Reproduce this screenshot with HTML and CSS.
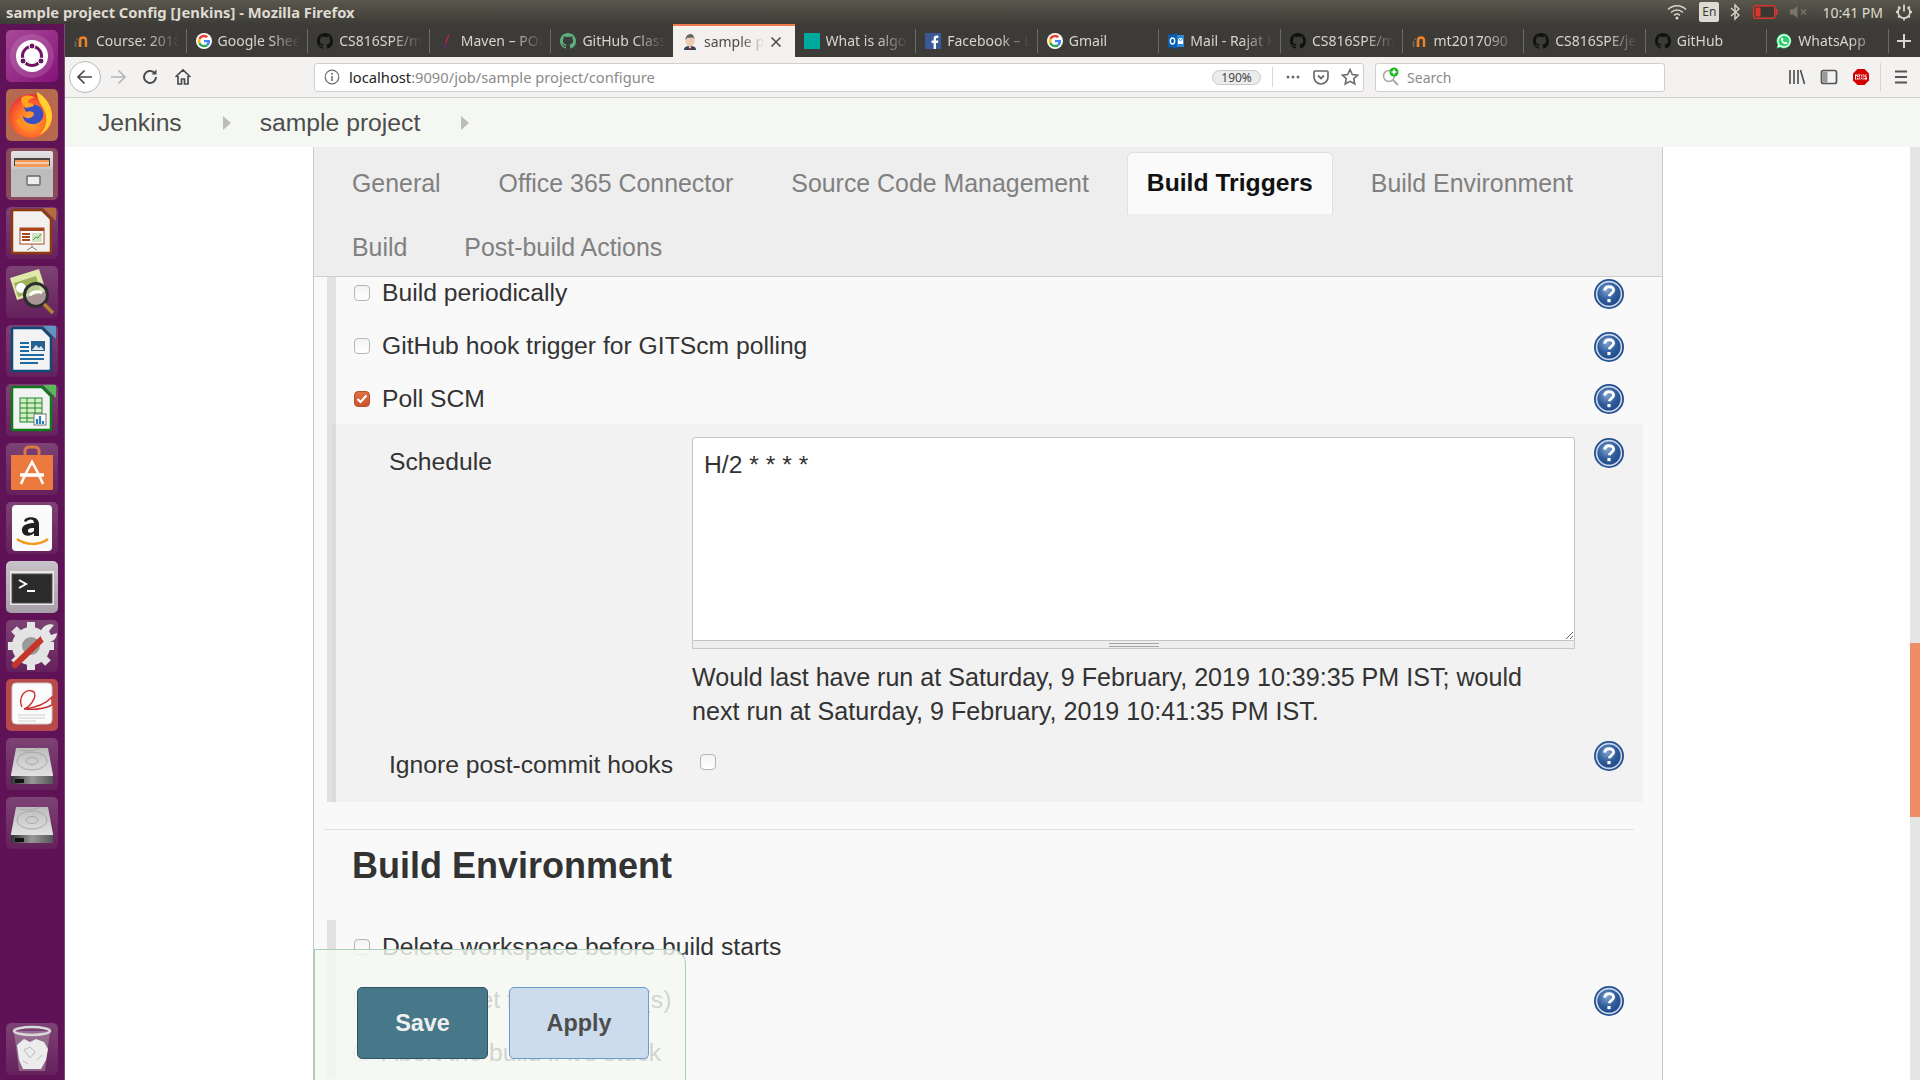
FILE: index.html
```html
<!DOCTYPE html>
<html lang="en">
<head>
<meta charset="utf-8">
<title>sample project Config [Jenkins]</title>
<link rel="stylesheet" href="styles.css">
</head>
<body>
<svg class="defs" width="0" height="0" aria-hidden="true">
  <defs>
    <radialGradient id="helpg" cx="42%" cy="35%" r="70%"><stop offset="0" stop-color="#7fa3d0"/><stop offset=".55" stop-color="#2f5c9b"/><stop offset="1" stop-color="#1f4586"/></radialGradient>
    <radialGradient id="ffg" cx="50%" cy="60%" r="60%"><stop offset="0" stop-color="#ffb02e"/><stop offset=".6" stop-color="#ff6a2a"/><stop offset="1" stop-color="#ea2f3a"/></radialGradient>
    <linearGradient id="filesg" x1="0" y1="0" x2="0" y2="1"><stop offset="0" stop-color="#e4e4e4"/><stop offset="1" stop-color="#9a9a9a"/></linearGradient>
    <linearGradient id="driveg" x1="0" y1="0" x2="0" y2="1"><stop offset="0" stop-color="#bdbdbd"/><stop offset="1" stop-color="#ececec"/></linearGradient>
    <linearGradient id="driveb" x1="0" y1="0" x2="1" y2="0"><stop offset="0" stop-color="#333"/><stop offset=".5" stop-color="#999"/><stop offset="1" stop-color="#555"/></linearGradient>
    <symbol id="i-help" viewBox="0 0 30 30">
      <circle cx="15" cy="15" r="15" fill="#25508f"/>
      <circle cx="15" cy="15" r="12.4" fill="url(#helpg)" stroke="#c9d8ec" stroke-width="1.6"/>
      <path d="M10.6 11.6c.3-2.6 2.2-3.9 4.6-3.9 2.6 0 4.4 1.5 4.4 3.6 0 2.9-3.9 3-4.4 6" fill="none" stroke="#fff" stroke-width="2.9"/>
      <rect x="13.4" y="20" width="3.2" height="3.2" fill="#fff"/>
    </symbol>
    <symbol id="i-github" viewBox="0 0 16 16"><path d="M8 0C3.58 0 0 3.58 0 8c0 3.54 2.29 6.53 5.47 7.59.4.07.55-.17.55-.38 0-.19-.01-.82-.01-1.49-2.01.37-2.53-.49-2.69-.94-.09-.23-.48-.94-.82-1.13-.28-.15-.68-.52-.01-.53.63-.01 1.08.58 1.23.82.72 1.21 1.87.87 2.33.66.07-.52.28-.87.51-1.07-1.78-.2-3.64-.89-3.64-3.95 0-.87.31-1.59.82-2.15-.08-.2-.36-1.02.08-2.12 0 0 .67-.21 2.2.82.64-.18 1.32-.27 2-.27.68 0 1.36.09 2 .27 1.53-1.04 2.2-.82 2.2-.82.44 1.1.16 1.92.08 2.12.51.56.82 1.27.82 2.15 0 3.07-1.87 3.75-3.65 3.95.29.25.54.73.54 1.48 0 1.07-.01 1.93-.01 2.2 0 .21.15.46.55.38A8.013 8.013 0 0016 8c0-4.42-3.58-8-8-8z"/></symbol>
    <symbol id="i-google" viewBox="0 0 48 48"><circle cx="24" cy="24" r="24" fill="#fff"/><g transform="translate(5 5) scale(.79)"><path fill="#EA4335" d="M24 9.5c3.5 0 6.7 1.2 9.2 3.6l6.9-6.9C35.9 2.4 30.5 0 24 0 14.6 0 6.5 5.4 2.6 13.2l8 6.2C12.4 13.7 17.7 9.5 24 9.5z"/><path fill="#4285F4" d="M47 24.6c0-1.6-.1-3.1-.4-4.6H24v9h12.9c-.6 3-2.2 5.5-4.7 7.2l7.7 6C44.400 38 47 31.900 47 24.600z"/><path fill="#FBBC05" d="M10.600 28.600A14.500 14.500 0 0 1 9.800 24c0-1.600.3-3.100.8-4.600l-8-6.200A24 24 0 0 0 0 24c0 3.900.9 7.500 2.600 10.800l8-6.200z"/><path fill="#34A853" d="M24 48c6.500 0 11.900-2.100 15.900-5.800l-7.700-6c-2.200 1.400-4.900 2.300-8.200 2.300-6.300 0-11.600-4.200-13.400-10l-8 6.200C6.500 42.600 14.600 48 24 48z"/></g></symbol>
    <symbol id="i-moodle" viewBox="0 0 16 16"><path d="M6 14V7.500c0-2 1.500-3 3-3s3 1 3 3V14" fill="none" stroke="#e8842c" stroke-width="2.400"/><path d="M6 6.500V14" stroke="#e8842c" stroke-width="2.400"/><path d="M1.500 14V8M3.300 7V5.500" stroke="#6e6a62" stroke-width="1.600"/></symbol>
    <symbol id="i-feather" viewBox="0 0 16 16"><path d="M10 1C8 4 6 9 5 15l1.300-.4C7.500 10 9 5 10.600 1.500z" fill="#c7253e"/><path d="M6.600 9 5 15l1.300-.4L7.500 10z" fill="#4c2a86"/></symbol>
    <symbol id="i-jenkins" viewBox="0 0 16 16"><path d="M2 16c0-3 2-4 6-4s6 1 6 4z" fill="#33435a"/><path d="M6.500 12.500h3L8 15z" fill="#fff"/><path d="M6 13l2 1.300L10 13v1.800H6z" fill="#b02a2a"/><ellipse cx="8" cy="6.500" rx="4.500" ry="6" fill="#eecbb0"/><path d="M3.500 6C3.500 2 6 0 8.500 0s4 2.500 4 5.500l-1.200-2C9 4 6 3.500 5 4z" fill="#6b6661"/></symbol>
    <symbol id="i-facebook" viewBox="0 0 16 16"><rect width="16" height="16" fill="#3b5998"/><path d="M11 16v-6h2l.3-2.400H11V6c0-.7.3-1.100 1.200-1.100h1.200V2.700C13 2.600 12.300 2.600 11.600 2.600 9.800 2.600 8.600 3.700 8.600 5.700v1.900h-2V10h2v6z" fill="#fff"/></symbol>
    <symbol id="i-outlook" viewBox="0 0 16 16"><rect x="5" y="2" width="11" height="12" fill="#2e8ad8"/><path d="M0 2l9-2v16l-9-2z" fill="#0b5cad"/><ellipse cx="4.500" cy="8" rx="2.200" ry="3" fill="none" stroke="#fff" stroke-width="1.400"/><path d="M10 5h5v6h-5z" fill="#fff"/><path d="M10 5l2.500 3L15 5" fill="none" stroke="#2e8ad8"/></symbol>
    <symbol id="i-whatsapp" viewBox="0 0 16 16"><path d="M8 .4a7.500 7.500 0 0 0-6.400 11.400L.5 15.600l3.900-1A7.500 7.500 0 1 0 8 .4z" fill="#25d366"/><path d="M8 2a6 6 0 0 0-5 9.300l-.6 2.200 2.300-.6A6 6 0 1 0 8 2z" fill="#25d366" stroke="#fff" stroke-width="1.300"/><path d="M5.800 4.700c-.6.400-1 1.200-.8 2.200.4 2 2.300 3.900 4.300 4.300 1 .2 1.900-.3 2.200-1l-.2-.8-1.500-.7-.7.800c-1-.3-1.900-1.200-2.300-2.200l.7-.7-.7-1.600z" fill="#fff"/></symbol>
    <symbol id="i-drive" viewBox="0 0 52 52"><path d="M10 10h32l5 27v9H5v-9z" fill="url(#driveg)"/><ellipse cx="26" cy="23" rx="15" ry="9" fill="none" stroke="#a8a8a8"/><ellipse cx="26" cy="23" rx="6" ry="3.500" fill="none" stroke="#a8a8a8"/><path d="M14 12c10 2 16 0 20-2" fill="none" stroke="#a8a8a8"/><rect x="5" y="38" width="42" height="8" fill="url(#driveb)"/><rect x="9" y="41" width="9" height="4" fill="#111"/></symbol>
  </defs>
</svg>

<div class="screen">
  <header class="titlebar">
    <span class="win-title">sample project Config [Jenkins] - Mozilla Firefox</span>
    <div class="indicators">
      <svg class="ind ind-wifi" width="20" height="16" viewBox="0 0 20 16"><g fill="none" stroke="#d8d5cd" stroke-width="1.500"><path d="M1 5.500c5-5 13-5 18 0"/><path d="M4 8.500c3.500-3.200 8.500-3.200 12 0"/><path d="M7 11.300c1.800-1.500 4.200-1.500 6 0"/></g><circle cx="10" cy="14" r="1.500" fill="#d8d5cd"/></svg>
      <span class="ind-lang">En</span>
      <svg class="ind ind-bt" width="10" height="18" viewBox="0 0 10 18"><path d="M1 5l8 7-4 4V2l4 4-8 7" fill="none" stroke="#d8d5cd" stroke-width="1.400"/></svg>
      <svg class="ind ind-batt" width="25" height="14" viewBox="0 0 25 14"><rect x=".7" y=".7" width="21" height="12.600" rx="1.500" fill="#3a3833" stroke="#d9372c" stroke-width="1.400"/><rect x="2.500" y="2.500" width="5" height="9" fill="#d9372c"/><rect x="22.500" y="4" width="2" height="6" fill="#d9372c"/></svg>
      <svg class="ind ind-vol" width="18" height="14" viewBox="0 0 18 14"><path d="M0 4.500h3L7.500 1v12L3 9.500H0z" fill="#77746c"/><path d="M11 4.500l5 5m0-5l-5 5" stroke="#77746c" stroke-width="1.500"/></svg>
      <span class="clock">10:41 PM</span>
      <svg class="ind ind-power" width="18" height="18" viewBox="0 0 18 18"><path d="M9 1.500v7" stroke="#d8d5cd" stroke-width="1.800"/><path d="M5.500 4.200a6 6 0 1 0 7 0" fill="none" stroke="#d8d5cd" stroke-width="1.800"/><path d="M1 9h2M15 9h2M3.200 3.500l1 1M13.800 4.500l1-1M3.200 14.500l1.300-1.300M13.500 13.200l1.300 1.300M9 16v1.500" stroke="#d8d5cd" stroke-width="1.800"/></svg>
    </div>
  </header>

  <div class="desk">
    <nav class="launcher">
      <div class="tile t-ubuntu"><svg viewBox="0 0 52 52"><circle cx="26" cy="26" r="22" fill="#fff" opacity=".13"/><circle cx="26" cy="26" r="16" fill="#fff"/><circle cx="26" cy="26" r="9.500" fill="none" stroke="#6e1563" stroke-width="3"/><circle cx="26" cy="16" r="3" fill="#6e1563" stroke="#fff"/><circle cx="17" cy="31" r="3" fill="#6e1563" stroke="#fff"/><circle cx="35" cy="31" r="3" fill="#6e1563" stroke="#fff"/></svg></div>
      <div class="tile t-firefox"><svg viewBox="0 0 52 52"><circle cx="25" cy="27" r="22" fill="url(#ffg)"/><path d="M31 3c9 5 16 15 15 26-1 8-6 14-13 17 7-6 9-15 6-23-2-6-8-11-8-20z" fill="#ffd02e"/><path d="M18 18c6-4 17-4 19 5 2 8-5 13-12 12-5-1-8-4-8-8 4 4 11 2 11-3-2-2-6-2-8-1z" fill="#3a4fc2"/><path d="M14 30c3 9 13 12 20 8-8 7-21 3-24-7z" fill="#ff8f1f"/><path d="M16 8c5-2 9-2 13 1-4 0-7 2-7 5 3 0 6 1 6 3l-8 2c-4-3-6-7-4-11z" fill="#ffa21f"/></svg></div>
      <div class="tile t-files"><svg viewBox="0 0 52 52"><rect x="5" y="3" width="42" height="46" rx="2" fill="url(#filesg)"/><rect x="8" y="10" width="36" height="8" fill="#4a4340"/><rect x="9" y="12" width="34" height="7" fill="#f09a5c"/><path d="M9 15h34" stroke="#fff"/><rect x="5" y="21" width="42" height="28" rx="1" fill="#bdbdbd"/><rect x="21" y="28" width="13" height="9" rx="1" fill="#eee" stroke="#666" stroke-width="1.400"/></svg></div>
      <div class="tile t-dim"><svg viewBox="0 0 52 52"><path d="M7 3h29l9 9v33a1 1 0 0 1-1 1H7a1 1 0 0 1-1-1V4z" fill="#f3f1ef" stroke="#8f3b0d" stroke-width="2.500"/><path d="M37 1l13 0v13z" fill="#b56c3d"/><rect x="14" y="21" width="24" height="16" fill="#fff" stroke="#a8481a"/><rect x="14" y="21" width="24" height="3" fill="#a8481a"/><path d="M16 27h8M16 30h8M16 33h8" stroke="#a8481a" stroke-width="1.800"/><rect x="26" y="26" width="10" height="9" fill="#cfe3c5"/><path d="M27 33l3-3 2 1 3-4" stroke="#4e9a3a" fill="none"/><path d="M26 37v3l-5 3m5-3l5 3" stroke="#888" fill="none"/></svg></div>
      <div class="tile t-dim"><svg viewBox="0 0 52 52"><path d="M4 12l29-9 7 22-29 9z" fill="#dfe8a8"/><path d="M8 17l22-7 4 14-22 7z" fill="#9db05c"/><circle cx="15" cy="22" r="5" fill="#fff"/><circle cx="30" cy="29" r="11.500" fill="#cfdcb8" fill-opacity=".6" stroke="#2d2d2d" stroke-width="3"/><path d="M24 29c3-4 8-4 12-2" stroke="#fff" stroke-width="3" fill="none"/><path d="M38 38l9 9" stroke="#b08532" stroke-width="3.500"/></svg></div>
      <div class="tile t-dim"><svg viewBox="0 0 52 52"><path d="M7 3h29l9 9v33a1 1 0 0 1-1 1H7a1 1 0 0 1-1-1V4z" fill="#f3f3f3" stroke="#0f4a78" stroke-width="2.500"/><path d="M37 1l13 0v13z" fill="#5a97c2"/><path d="M14 18h9M14 22h9M14 26h9M14 30h24M14 34h24M14 38h18" stroke="#1f6aa0" stroke-width="2"/><rect x="25" y="16" width="14" height="10" fill="#26628f"/><path d="M26 25l4-5 3 3 2-2 3 4z" fill="#dfe6ec"/></svg></div>
      <div class="tile t-dim"><svg viewBox="0 0 52 52"><path d="M7 3h29l9 9v33a1 1 0 0 1-1 1H7a1 1 0 0 1-1-1V4z" fill="#f3f3f3" stroke="#0f7a1a" stroke-width="2.500"/><path d="M37 1l13 0v13z" fill="#58b85a"/><rect x="14" y="14" width="22" height="24" fill="#d7ecc9" stroke="#1d8a26"/><path d="M14 19h22M14 24h22M14 29h22M14 34h22M21 14v24M29 14v24" stroke="#1d8a26"/><rect x="28" y="30" width="12" height="11" fill="#fff" stroke="#777"/><path d="M31 40v-5M34 40v-8M37 40v-3" stroke-width="2.200" stroke="#2f7fc0"/></svg></div>
      <div class="tile t-dim"><svg viewBox="0 0 52 52"><path d="M19 12V8a4 4 0 0 1 4-4h6a4 4 0 0 1 4 4v4" fill="none" stroke="#d77a45" stroke-width="3"/><path d="M5 12h42v34a1 1 0 0 1-1 1H6a1 1 0 0 1-1-1z" fill="#ec7a3e"/><path d="M26 19l-7 13h14zM19 32l-4 9m18-9l4 9" fill="none" stroke="#fff" stroke-width="2.500"/><path d="M14 32h24" stroke="#fff" stroke-width="3.500"/></svg></div>
      <div class="tile t-dim"><svg viewBox="0 0 52 52"><rect x="6" y="3" width="40" height="46" rx="4" fill="#fafafa"/><path d="M18 19c1-5 15-6 15 3v12h-5v-3c-3 4-11 4-12-2-1-6 6-8 12-8 0-5-6-4-8-1zM28 26c-3 0-6 0-6 3 0 3 6 2 6-1z" fill="#1f1f1f" fill-rule="evenodd"/><path d="M11 37c8 6 22 7 31 0" fill="none" stroke="#f29a1f" stroke-width="2.500"/></svg></div>
      <div class="tile t-term"><svg viewBox="0 0 52 52"><rect x="4" y="10" width="44" height="34" fill="#e9e9e9"/><rect x="6" y="13" width="40" height="29" fill="#2b2b2b" stroke="#555"/><path d="M13 19l7 4-7 4" fill="none" stroke="#fff" stroke-width="2"/><path d="M21 30h8" stroke="#fff" stroke-width="2"/></svg></div>
      <div class="tile t-dim"><svg viewBox="0 0 52 52"><circle cx="25" cy="26" r="14" fill="#9a9a9a" stroke="#e4e4e4" stroke-width="10"/><path d="M25 2v6M25 44v6M2 26h6M42 26h6M8 9l4 4M38 39l4 4M8 43l4-4" stroke="#e4e4e4" stroke-width="8"/><path d="M9 45l27-26" stroke="#c4362b" stroke-width="6" stroke-linecap="round"/><path d="M35 11c2-6 9-8 13-6l-5 6 2 4 6-2c0 7-7 11-13 9-3-3-4-7-3-11z" fill="#e6e6e6"/></svg></div>
      <div class="tile t-evince"><svg viewBox="0 0 52 52"><rect x="6" y="4" width="40" height="41" rx="4" fill="#fbfbfb" stroke="#ccc"/><path d="M16 28c-4-9 2-18 10-16 7 2 0 15-8 18 9-1 20-3 28-12v8c-8 4-18 5-28 4" fill="none" stroke="#cf2d2d" stroke-width="1.400"/><path d="M12 36h27M12 39h27M12 42h18" stroke="#cfcfcf" stroke-width="1.200"/></svg></div>
      <div class="tile t-dim"><svg viewBox="0 0 52 52"><use href="#i-drive"/></svg></div>
      <div class="tile t-dim"><svg viewBox="0 0 52 52"><use href="#i-drive"/></svg></div>
      <div class="tile t-dim t-trash"><svg viewBox="0 0 52 52"><path d="M8 8l5 40h26l5-40z" fill="#b9a9b8" fill-opacity=".45"/><ellipse cx="26" cy="8" rx="18" ry="4" fill="none" stroke="#d8d8d8" stroke-width="2.500"/><path d="M11 22l7-6 6 3 6-3 8 3 4 7-2 11-5 9H17l-4-9z" fill="#ececec"/><path d="M18 27l6-3 5 5-5 6zM31 37l5-5M17 38l5 3" stroke="#bbb" fill="none"/></svg></div>
    </nav>

    <div class="browser">
      <div class="tabstrip">
        <div class="tab"><div class="tab-in"><svg class="fav"><use href="#i-moodle"/></svg><span class="tab-label">Course: 2018-19</span></div></div>
        <div class="tab"><div class="tab-in"><svg class="fav"><use href="#i-google"/></svg><span class="tab-label">Google Sheets</span></div></div>
        <div class="tab"><div class="tab-in"><svg class="fav fav-black"><use href="#i-github"/></svg><span class="tab-label">CS816SPE/maven</span></div></div>
        <div class="tab"><div class="tab-in"><svg class="fav"><use href="#i-feather"/></svg><span class="tab-label">Maven – POM Reference</span></div></div>
        <div class="tab"><div class="tab-in no-sep"><svg class="fav fav-green"><use href="#i-github"/></svg><span class="tab-label">GitHub Classroom</span></div></div>
        <div class="tab tab-active"><div class="tab-in no-sep"><svg class="fav"><use href="#i-jenkins"/></svg><span class="tab-label">sample project</span><svg class="tab-x" width="12" height="12" viewBox="0 0 12 12"><path d="M1.500 1.500l9 9m0-9l-9 9" stroke="#4a4a4a" stroke-width="1.500"/></svg></div></div>
        <div class="tab"><div class="tab-in"><span class="fav fav-teal"></span><span class="tab-label">What is algorithm</span></div></div>
        <div class="tab"><div class="tab-in"><svg class="fav"><use href="#i-facebook"/></svg><span class="tab-label">Facebook – Log In</span></div></div>
        <div class="tab"><div class="tab-in"><svg class="fav"><use href="#i-google"/></svg><span class="tab-label">Gmail</span></div></div>
        <div class="tab"><div class="tab-in"><svg class="fav"><use href="#i-outlook"/></svg><span class="tab-label">Mail - Rajat Kumar</span></div></div>
        <div class="tab"><div class="tab-in"><svg class="fav fav-black"><use href="#i-github"/></svg><span class="tab-label">CS816SPE/maven</span></div></div>
        <div class="tab"><div class="tab-in"><svg class="fav"><use href="#i-moodle"/></svg><span class="tab-label">mt2017090</span></div></div>
        <div class="tab"><div class="tab-in"><svg class="fav fav-black"><use href="#i-github"/></svg><span class="tab-label">CS816SPE/jenkins</span></div></div>
        <div class="tab"><div class="tab-in"><svg class="fav fav-black"><use href="#i-github"/></svg><span class="tab-label">GitHub</span></div></div>
        <div class="tab"><div class="tab-in"><svg class="fav"><use href="#i-whatsapp"/></svg><span class="tab-label">WhatsApp</span></div></div>
        <div class="tab-new"><svg width="16" height="16" viewBox="0 0 16 16"><path d="M8 1v14M1 8h14" stroke="#d8d5cd" stroke-width="2"/></svg></div>
      </div>

      <div class="navbar">
        <button class="nav-btn nav-back"><svg width="18" height="18" viewBox="0 0 18 18"><path d="M16 9H2.500M8.500 2.500L2 9l6.500 6.500" fill="none" stroke="#4a4a4a" stroke-width="1.700"/></svg></button>
        <button class="nav-btn"><svg width="18" height="18" viewBox="0 0 18 18"><path d="M2 9h13.500M9.500 2.500L16 9l-6.500 6.500" fill="none" stroke="#b5b5b5" stroke-width="1.700"/></svg></button>
        <button class="nav-btn"><svg width="18" height="18" viewBox="0 0 18 18"><path d="M15 9a6 6 0 1 1-2-4.500" fill="none" stroke="#4a4a4a" stroke-width="2"/><path d="M15.500 1.500v5h-5z" fill="#4a4a4a"/></svg></button>
        <button class="nav-btn"><svg width="18" height="18" viewBox="0 0 18 18"><path d="M1.500 9L9 2l7.500 7M4 8v8h3.500v-5h3v5H14V8" fill="none" stroke="#4a4a4a" stroke-width="1.700"/></svg></button>
        <div class="urlbar">
          <svg class="url-info" width="16" height="16" viewBox="0 0 16 16"><circle cx="8" cy="8" r="6.800" fill="none" stroke="#6b6b6b" stroke-width="1.200"/><path d="M8 7v5" stroke="#6b6b6b" stroke-width="1.500"/><circle cx="8" cy="4.700" r="1" fill="#6b6b6b"/></svg>
          <span class="url-text"><b class="url-host">localhost</b>:9090/job/sample project/configure</span>
          <span class="zoom-pill">190%</span>
          <span class="url-sep"></span>
          <svg class="url-ico" width="16" height="16" viewBox="0 0 16 16"><g fill="#6b6b6b"><circle cx="3" cy="8" r="1.500"/><circle cx="8" cy="8" r="1.500"/><circle cx="13" cy="8" r="1.500"/></g></svg>
          <svg class="url-ico" width="16" height="16" viewBox="0 0 16 16"><path d="M2 2h12a1 1 0 0 1 1 1v5a7 7 0 0 1-14 0V3a1 1 0 0 1 1-1z" fill="none" stroke="#6b6b6b" stroke-width="1.700"/><path d="M5 6.500l3 3 3-3" fill="none" stroke="#6b6b6b" stroke-width="1.800"/></svg>
          <svg class="url-ico" width="18" height="18" viewBox="0 0 18 18"><path d="M9 1.500l2.300 5 5.300.6-3.900 3.600 1.100 5.300L9 13.300 4.200 16l1.100-5.300L1.400 7.100l5.300-.6z" fill="none" stroke="#6b6b6b" stroke-width="1.600"/></svg>
        </div>
        <div class="searchbar">
          <svg class="search-ico" width="18" height="20" viewBox="0 0 18 20"><circle cx="7" cy="9" r="5.500" fill="none" stroke="#a8a8a8" stroke-width="1.500"/><path d="M11 13l5 5" stroke="#a8a8a8" stroke-width="1.800"/><circle cx="12" cy="5" r="4.500" fill="#1cb51c"/><path d="M12 2.500v5M9.500 5h5" stroke="#fff" stroke-width="1.500"/></svg>
          <span class="search-text">Search</span>
        </div>
        <div class="nav-right">
          <svg width="18" height="18" viewBox="0 0 18 18"><path d="M2 2v14M6 2v14M10 2v14M12.500 2l4 14" stroke="#555" stroke-width="1.700" fill="none"/></svg>
          <svg width="18" height="18" viewBox="0 0 18 18"><rect x="1.500" y="2.500" width="15" height="13" rx="2" fill="none" stroke="#555" stroke-width="1.700"/><rect x="2.500" y="3.500" width="5" height="11" fill="#999"/></svg>
          <svg width="18" height="18" viewBox="0 0 18 18"><path d="M5.500 1h7L17 5.500v7L12.500 17h-7L1 12.500v-7z" fill="#d40000"/><path d="M3 6.500h12v5H3z" fill="#fff"/><path d="M4.500 11.500V8l1.200-1 1.200 1v3.500M4.500 9.500h2.400M8.400 6.700v4.600h1.600a1.100 1.100 0 0 0 0-2.300H8.400M8.400 9h1.400a1 1 0 0 0 0-2.200H8.400M12 11.500V6.800h1.300a1.300 1.300 0 0 1 0 2.700H12" fill="none" stroke="#d40000" stroke-width=".9"/></svg>
          <span class="nav-sep"></span>
          <svg width="18" height="18" viewBox="0 0 18 18"><path d="M3 3.500h12M3 9h12M3 14.500h12" stroke="#555" stroke-width="1.800"/></svg>
        </div>
      </div>

      <div class="breadcrumb">
        <span class="crumb">Jenkins</span><span class="crumb-arrow"></span>
        <span class="crumb">sample project</span><span class="crumb-arrow"></span>
      </div>

      <div class="workspace">
        <main class="panel">
          <div class="cfg-tabs">
            <span class="cfg-tab">General</span>
            <span class="cfg-tab">Office 365 Connector</span>
            <span class="cfg-tab">Source Code Management</span>
            <span class="cfg-tab cfg-tab-active">Build Triggers</span>
            <span class="cfg-tab">Build Environment</span>
            <span class="cfg-tab">Build</span>
            <span class="cfg-tab">Post-build Actions</span>
          </div>

          <section class="triggers">
            <div class="row"><span class="cb"></span><label class="row-label">Build periodically</label><svg class="help"><use href="#i-help"/></svg></div>
            <div class="row"><span class="cb"></span><label class="row-label">GitHub hook trigger for GITScm polling</label><svg class="help"><use href="#i-help"/></svg></div>
            <div class="row row-last"><span class="cb cb-on"><svg width="16" height="16" viewBox="0 0 16 16"><path d="M3.500 8l3 3 6-6.500" fill="none" stroke="#fff" stroke-width="2.200"/></svg></span><label class="row-label">Poll SCM</label><svg class="help"><use href="#i-help"/></svg></div>
            <div class="sub">
              <div class="sub-label">Schedule</div>
              <div class="sub-field">
                <textarea class="schedule">H/2 * * * *</textarea>
                <div class="grippie"><span class="grip"></span></div>
                <p class="validation">Would last have run at Saturday, 9 February, 2019 10:39:35 PM IST; would next run at Saturday, 9 February, 2019 10:41:35 PM IST.</p>
              </div>
              <svg class="help sub-help"><use href="#i-help"/></svg>
              <div class="sub-label sub-label-2">Ignore post-commit hooks</div>
              <div class="sub-field"><span class="cb cb-ignore"></span></div>
              <svg class="help sub-help-2"><use href="#i-help"/></svg>
            </div>
          </section>

          <hr class="rule">
          <h2 class="sect-title">Build Environment</h2>

          <section class="env">
            <div class="row"><span class="cb"></span><label class="row-label">Delete workspace before build starts</label></div>
            <div class="row"><span class="cb"></span><label class="row-label">Use secret text(s) or file(s)</label><svg class="help"><use href="#i-help"/></svg></div>
            <div class="row"><span class="cb"></span><label class="row-label">Abort the build if it's stuck</label></div>
          </section>

          <div class="savebar">
            <button class="btn btn-save">Save</button>
            <button class="btn btn-apply">Apply</button>
          </div>
        </main>
        <div class="scrollbar"><div class="thumb"></div></div>
      </div>
    </div>
  </div>
</div>
</body>
</html>
```

FILE: styles.css
```css
* { box-sizing: border-box; }
html, body { margin: 0; padding: 0; height: 100%; overflow: hidden; }
body { font-family: "Liberation Sans", Arial, sans-serif; color: #333; background: #fff; }
.defs { position: absolute; }
.screen { width: 1920px; height: 1080px; display: flex; flex-direction: column; overflow: hidden; }

/* Ubuntu title bar */
.titlebar { height: 24px; flex: none; display: flex; align-items: center; justify-content: space-between; padding-left: 6px; background: linear-gradient(#5a574c, #3d3c37); }
.win-title { font: 700 14.75px "Noto Sans", sans-serif; color: #dfdbd2; }
.indicators { display: flex; align-items: center; height: 24px; }
.ind { flex: none; }
.ind-wifi { margin-right: 12px; }
.ind-lang { width: 20px; height: 20px; margin-right: 11px; background: #dfdbd2; color: #3c3b37; font: 12px/20px "Noto Sans", sans-serif; text-align: center; border-radius: 2px; }
.ind-bt { margin-right: 13px; }
.ind-batt { margin-right: 12px; }
.ind-vol { margin-right: 14px; }
.clock { font: 14px "Noto Sans", sans-serif; color: #dfdbd2; margin-right: 12px; }
.ind-power { margin-right: 7px; }

.desk { flex: 1; display: flex; min-height: 0; }

/* Launcher */
.launcher { width: 65px; flex: none; display: flex; flex-direction: column; gap: 7px; padding: 6px 0 5px 6px; background: #5f1256; border-right: 1px solid #7d4a77; }
.tile { width: 52px; height: 52px; flex: none; border-radius: 5px; }
.tile svg { display: block; width: 52px; height: 52px; }
.t-ubuntu { background: linear-gradient(135deg, #a84a99, #87127a); }
.t-firefox { background: #b5694f; }
.t-files { background: #8b4a5b; }
.t-dim { background: linear-gradient(#7d4274, #65215c); }
.t-term { background: linear-gradient(#c8c3c8, #a89fa8); }
.t-evince { background: #b94a4c; }
.t-trash { margin-top: auto; }

/* Browser chrome */
.browser { flex: 1; min-width: 0; display: flex; flex-direction: column; }
.tabstrip { height: 33px; flex: none; display: flex; background: #3c3b37; }
.tab { flex: 1 1 0; min-width: 0; display: flex; align-items: center; }
.tab-in { flex: 1; min-width: 0; height: 24px; display: flex; align-items: center; gap: 6px; padding-left: 9px; border-right: 1px solid #6d6b66; }
.no-sep { border-right: 0; }
.tab-active { background: #f3f0ee; border-top: 2px solid #ef7b4f; }
.tab-new { width: 31px; flex: none; display: flex; align-items: center; justify-content: center; }
.fav { width: 16px; height: 16px; flex: none; display: block; }
.fav-black { fill: #111; }
.fav-green { fill: #5bb07e; }
.fav-teal { background: #00a99d; }
.tab-label { flex: 1; min-width: 0; margin-right: 7px; overflow: hidden; white-space: nowrap; font: 14px "Noto Sans", sans-serif; color: #d8d5cd; -webkit-mask-image: linear-gradient(90deg, #000 62%, transparent 100%); mask-image: linear-gradient(90deg, #000 62%, transparent 100%); }
.tab-active .tab-label { color: #4a4a4a; margin-right: 0; }
.tab-x { flex: none; margin-right: 13px; }

.navbar { height: 41px; flex: none; display: flex; align-items: center; padding-left: 4px; background: #f4f2f0; border-bottom: 1px solid #cfcdca; }
.nav-btn { width: 32px; height: 32px; flex: none; padding: 0; display: flex; align-items: center; justify-content: center; background: none; border: 0; border-radius: 50%; }
.nav-btn + .nav-btn { margin-left: .7px; }
.nav-back { background: #fff; border: 1px solid #b9b9b9; }
.urlbar { width: 1050px; height: 29px; flex: none; margin-left: 115px; display: flex; align-items: center; padding: 0 4px 0 9px; background: #fff; border: 1px solid #cfcfcf; border-radius: 3px; }
.url-info { flex: none; margin-right: 9px; }
.url-text { flex: 1; font: 14.7px "Noto Sans", sans-serif; color: #8a8a8a; white-space: nowrap; }
.url-host { font-weight: 400; color: #222; }
.zoom-pill { width: 49px; height: 15px; margin-right: 11px; font: 12px/13px "Noto Sans", sans-serif; text-align: center; color: #444; background: #ececec; border: 1px solid #c8c8c8; border-radius: 8px; }
.url-sep { width: 1px; height: 20px; margin-right: 12px; background: #d8d8d8; }
.url-ico { flex: none; margin-right: 12px; }
.url-ico:last-child { margin-right: 0; }
.searchbar { width: 290px; height: 29px; flex: none; margin-left: 11px; display: flex; align-items: center; gap: 7px; padding-left: 6px; background: #fff; border: 1px solid #cfcfcf; border-radius: 3px; }
.search-ico { flex: none; }
.search-text { font: 14px "Noto Sans", sans-serif; color: #8a8a8a; }
.nav-right { flex: 1; display: flex; align-items: center; justify-content: flex-end; gap: 14px; padding-right: 10px; }
.nav-sep { width: 1px; height: 28px; margin: 0 -3px 0 -4px; background: #d8d6d3; }

/* Jenkins breadcrumb */
.breadcrumb { height: 49px; flex: none; display: flex; align-items: center; padding-left: 33px; background: #f5f8f2; }
.crumb { font-size: 24.7px; color: #4d4d4d; }
.crumb-arrow { width: 0; height: 0; margin: 0 29px 0 41px; border-left: 8px solid #bcbcbc; border-top: 7px solid transparent; border-bottom: 7px solid transparent; }

.workspace { flex: 1; min-height: 0; display: flex; justify-content: space-between; }
.panel { position: relative; width: 1350px; margin-left: 248px; overflow: hidden; background: #f9f9f9; border-left: 1px solid #c8c8c8; border-right: 1px solid #c8c8c8; font-size: 24.7px; }
.scrollbar { width: 10px; flex: none; padding-top: 496px; background: #e5e5e5; }
.thumb { height: 174px; background: #ef8d66; }

/* Config tabs */
.cfg-tabs { position: relative; z-index: 2; height: 130px; display: flex; flex-wrap: wrap; align-content: flex-start; row-gap: 1px; padding: 5px 18px 0; background: #eeeeee; border-bottom: 1px solid #cfcfcf; font-size: 24.9px; }
.cfg-tab { height: 62px; line-height: 62px; padding: 0 20px; margin-right: 18px; color: #808080; border-radius: 6px 6px 0 0; }
.cfg-tab:nth-child(n+6) { line-height: 64px; margin-right: 17px; }
.cfg-tab-active { font-size: 24.7px; font-weight: 700; color: #111; background: #fafafa; border: 1px solid #e0e0e0; border-bottom: 0; padding: 0 19px; line-height: 60px; }

/* Form rows */
.triggers { margin: -11px 19px 0 13px; border-left: 5px solid #e2e2e2; }
.env { margin: 32px 19px 0 13px; border-left: 5px solid #e2e2e2; }
.row { height: 53px; display: flex; align-items: center; padding-right: 19px; border-left: 4px solid #e2e2e2; }
.row-last { height: 52px; padding-top: 2px; }
.cb { flex: none; display: block; width: 16px; height: 16px; margin-left: 18px; background: linear-gradient(#f3f3f3, #fff); border: 1px solid #b5b5b5; border-radius: 4px; }
.cb-on { background: linear-gradient(#e26f42, #c9552c); border-color: #b95029; }
.cb-on svg { display: block; margin: -1px; }
.row-label { margin-left: 12px; color: #333; }
.help { flex: none; width: 30px; height: 30px; margin: 2px 0 0 auto; display: block; }
.row-last .help { margin-top: 0; }

.sub { display: grid; grid-template-columns: 356px 883px 30px; column-gap: 0; align-items: start; align-content: start; height: 378px; padding-top: 13px; background: #f2f2f2; border-left: 4px solid #dcdcdc; }
.sub-label { padding: 11px 0 0 53px; line-height: 28px; }
.sub-label-2 { padding-top: 23px; }
.sub-help { margin: 1px 0 0 19px; }
.sub-help-2 { margin: 13px 0 0 19px; }
.schedule { display: block; width: 883px; height: 204px; padding: 13px 11px; font: 24.7px "Liberation Sans", Arial, sans-serif; color: #333; background: #fff; border: 1px solid #c4c4c4; border-radius: 3px 3px 0 0; outline: 0; }
.grippie { height: 8px; display: flex; align-items: center; justify-content: center; background: #eeeeee; border: 1px solid #c8c8c8; border-top: 0; }
.grip { width: 50px; height: 4px; border-top: 1px solid #a5a5a5; border-bottom: 1px solid #a5a5a5; }
.validation { margin: 11px 0 0; padding-right: 10px; font-size: 25.1px; line-height: 34px; }
.cb-ignore { margin: 26px 0 0 8px; }

.rule { height: 1px; margin: 27px 28px 0 10px; border: 0; background: #e0e0e0; }
.sect-title { margin: 14px 0 0 38px; font-size: 36px; line-height: 44px; font-weight: 700; color: #333; }

/* Sticky save bar */
.savebar { position: absolute; left: 0; bottom: 0; width: 372px; height: 131px; display: flex; align-items: flex-start; gap: 21px; padding: 37px 0 0 42px; background: rgba(245, 248, 242, .82); border: 1px solid #a9cdb9; border-bottom: 0; border-radius: 0 15px 0 0; }
.btn { height: 72px; font: 700 23.4px "Liberation Sans", Arial, sans-serif; border-radius: 5px; }
.btn-save { width: 131px; color: #f0f0f0; background: #46788a; border: 1px solid #2e5563; }
.btn-apply { width: 140px; color: #4d4d4d; background: #ccdcec; border: 1px solid #6b9bd1; }
```
